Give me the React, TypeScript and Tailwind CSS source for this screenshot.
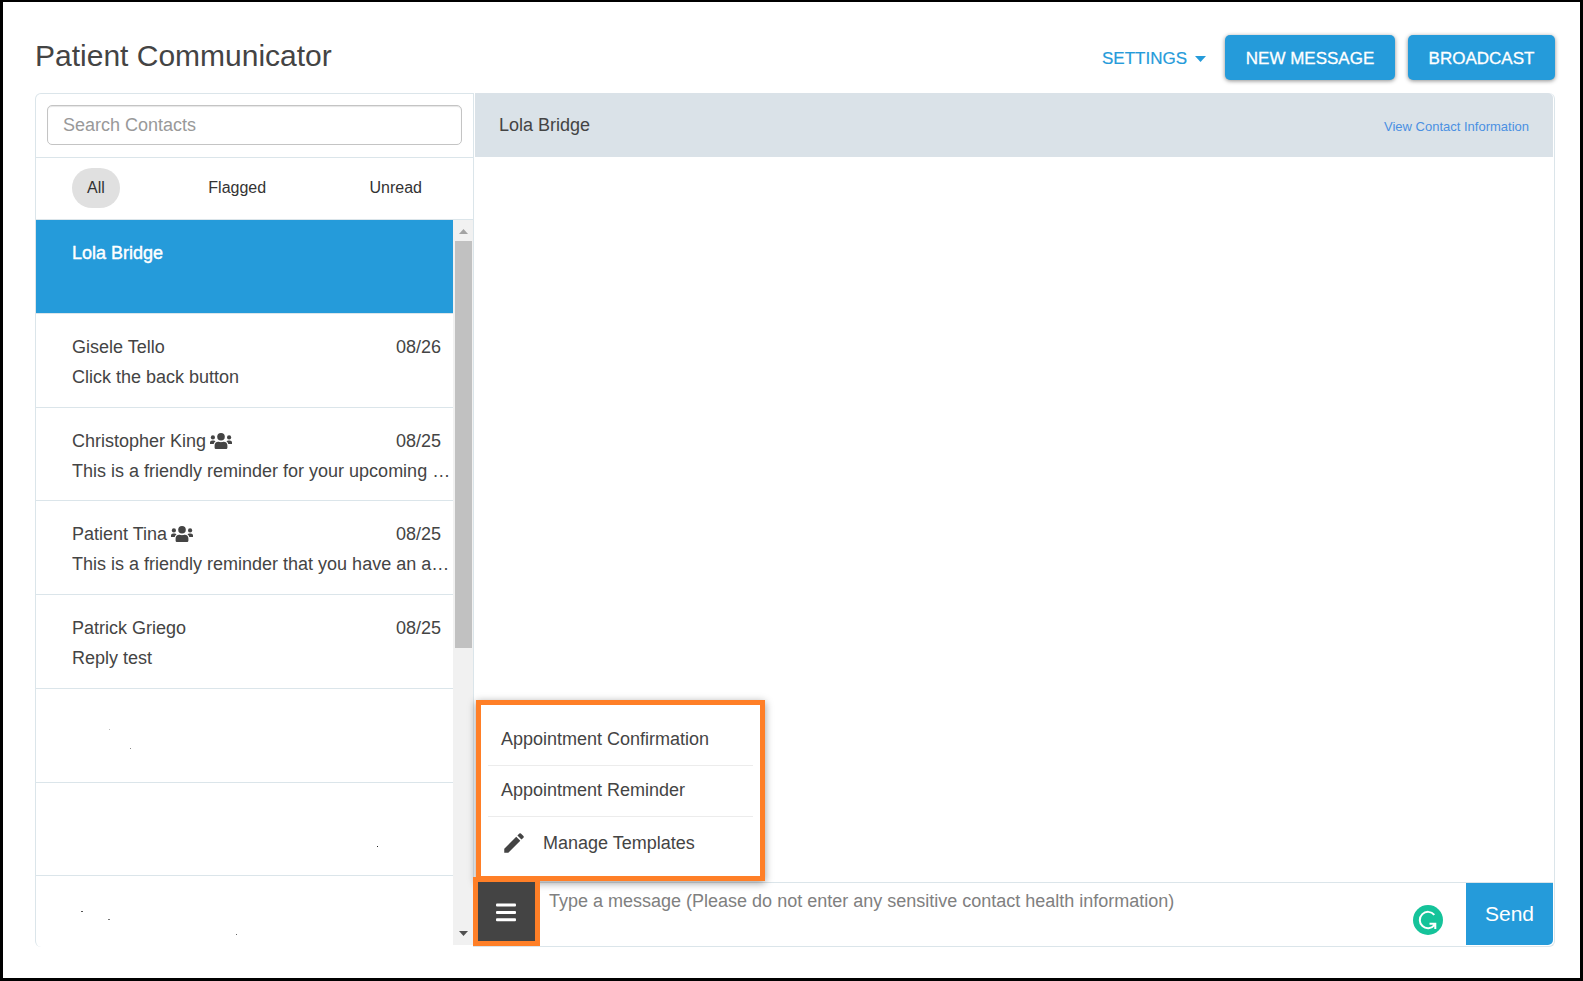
import React from "react";
import { MdEdit } from "react-icons/md";

type Contact = {
  name: string;
  date?: string;
  preview?: string;
  group?: boolean;
  selected?: boolean;
};

const contacts: Contact[] = [
  { name: "Lola Bridge", selected: true },
  { name: "Gisele Tello", date: "08/26", preview: "Click the back button" },
  {
    name: "Christopher King",
    date: "08/25",
    preview: "This is a friendly reminder for your upcoming …",
    group: true,
  },
  {
    name: "Patient Tina",
    date: "08/25",
    preview: "This is a friendly reminder that you have an a…",
    group: true,
  },
  { name: "Patrick Griego", date: "08/25", preview: "Reply test" },
  { name: "" },
  { name: "" },
  { name: "" },
];

function GroupIcon() {
  return (
    <svg viewBox="0 0 22 16" className="h-4 w-[22px] shrink-0" fill="currentColor" role="img" aria-label="Group">
      <circle cx="11" cy="3.800" r="3.800" />
      <circle cx="2.900" cy="4.400" r="2.100" />
      <circle cx="19.100" cy="4.400" r="2.100" />
      <path d="M4.600 14.400V12.600C4.600 10.300 6 8.800 8.200 8.800C9.100 8.800 9.600 9.200 11 9.200S12.900 8.800 13.800 8.800C16 8.800 17.400 10.300 17.400 12.600V14.400C17.400 15.300 16.700 16 15.800 16H6.200C5.300 16 4.600 15.300 4.600 14.400Z" />
      <path d="M0 10.900V9.600C0 8.200 1 7.400 2.200 7.400H3.600C4.400 7.400 5 7.700 5.500 8.200C4.500 8.900 3.900 9.800 3.700 10.900Z" />
      <path d="M22 10.900V9.600C22 8.200 21 7.400 19.800 7.400H18.400C17.600 7.400 17 7.700 16.500 8.200C17.500 8.900 18.100 9.800 18.300 10.900Z" />
    </svg>
  );
}

function Header() {
  const primary =
    "h-[45px] rounded-[5px] bg-[#259bda] pt-[2px] text-[17px] text-white shadow-[0_1px_4px_rgba(0,0,0,0.45)] [-webkit-text-stroke:0.3px_white]";
  return (
    <header className="flex items-start justify-between pr-[25px] pl-8">
      <h1 className="pt-1 text-[30px] leading-[34px] text-[#444]">Patient Communicator</h1>
      <div className="flex items-center">
        <button
          type="button"
          className="mr-[19px] flex items-center gap-2 pt-[2px] text-[17px] text-[#259bda] [-webkit-text-stroke:0.2px_#259bda]"
        >
          SETTINGS
          <svg viewBox="0 0 11 6" className="h-[6px] w-[11px]" fill="currentColor" aria-hidden="true">
            <path d="M0 0h11L5.500 6z" />
          </svg>
        </button>
        <button type="button" className={primary + " mr-[13px] w-[170px]"}>
          NEW MESSAGE
        </button>
        <button type="button" className={primary + " w-[147px]"}>
          BROADCAST
        </button>
      </div>
    </header>
  );
}

function ContactRow({ c }: { c: Contact }) {
  return (
    <li
      className={
        c.selected
          ? "min-w-0 border-b border-[#dbe5ea] bg-[#259bda] pt-[18px] pl-9 text-white"
          : "min-w-0 border-b border-[#dbe5ea] pt-[18px] pl-9"
      }
    >
      <div className="flex items-center justify-between pr-3">
        <span
          className={
            c.selected
              ? "flex items-center gap-1 [-webkit-text-stroke:0.4px_white]"
              : "flex items-center gap-1"
          }
        >
          {c.name}
          {c.group && <GroupIcon />}
        </span>
        <span>{c.date}</span>
      </div>
      <p className="truncate">{c.preview}</p>
    </li>
  );
}

function ScrollBar() {
  return (
    <div className="mb-[2px] flex w-5 shrink-0 flex-col items-center bg-[#f1f1f1]" aria-hidden="true">
      <svg viewBox="0 0 20 21" className="h-[21px] w-5 shrink-0" fill="#a3a3a3">
        <path d="M6 14L10.500 9L15 14z" />
      </svg>
      <div className="flex w-full flex-1 flex-col pr-px pl-[2px]">
        <div className="grow-[406] basis-0 bg-[#c1c1c1]" />
        <div className="grow-[276] basis-0" />
      </div>
      <svg viewBox="0 0 20 21" className="h-[21px] w-5 shrink-0" fill="#505050">
        <path d="M6 7H15L10.500 12z" />
      </svg>
    </div>
  );
}

function Specks() {
  return (
    <svg className="pointer-events-none absolute top-0 left-0 h-[725px] w-[416px]" aria-hidden="true">
      <rect x="73" y="509" width="1" height="1" fill="#bbb" />
      <rect x="94" y="528" width="1" height="1" fill="#888" />
      <rect x="341" y="626" width="1" height="1" fill="#222" />
      <rect x="45" y="691" width="2" height="1" fill="#555" />
      <rect x="72" y="699" width="2" height="1" fill="#777" />
      <rect x="200" y="714" width="1" height="1" fill="#666" />
    </svg>
  );
}

function Sidebar() {
  return (
    <aside className="flex w-[439px] shrink-0 flex-col rounded-l-[6px] border-t border-r border-l border-[#dbe5ea]">
      <div className="border-b border-[#dbe5ea] px-[11px] pt-[11px] pb-3">
        <input
          type="text"
          aria-label="Search Contacts"
          placeholder="Search Contacts"
          className="block h-10 w-full rounded-[5px] border border-[#c4c4c4] px-[15px] text-[18px] shadow-[inset_0_1px_1px_rgba(0,0,0,0.1)] placeholder:text-[#999]"
        />
      </div>
      <div className="flex h-[62px] items-start justify-between border-b border-[#dbe5ea] px-9 pt-[10px] text-[16px] text-[#333]">
        <button type="button" className="h-10 w-12 rounded-[20px] bg-[#e0e0e0]">
          All
        </button>
        <button type="button" className="h-10 px-[15px]">
          Flagged
        </button>
        <button type="button" className="h-10 px-[15px]">
          Unread
        </button>
      </div>
      <div className="flex min-h-0 flex-1">
        <div className="relative min-w-0 flex-1 overflow-hidden">
          <ul className="grid h-[750px] grid-cols-1 grid-rows-8 text-[18px] leading-[30px]">
            {contacts.map((c, i) => (
              <ContactRow key={i} c={c} />
            ))}
          </ul>
          <Specks />
        </div>
        <ScrollBar />
      </div>
    </aside>
  );
}

function TemplateMenu() {
  return (
    <ul
      role="menu"
      className="absolute bottom-[2px] left-[2px] w-[289px] border-[5px] border-[#ff7f27] bg-white px-[7px] pt-[9px] pb-[7px] shadow-[0_2px_8px_rgba(0,0,0,0.4)]"
    >
      <li className="border-b border-[#ececec]">
        <button type="button" role="menuitem" className="flex h-[51px] w-full items-center px-[13px]">
          Appointment Confirmation
        </button>
      </li>
      <li className="border-b border-[#ececec]">
        <button type="button" role="menuitem" className="flex h-[50px] w-full items-center px-[13px] pb-[2px]">
          Appointment Reminder
        </button>
      </li>
      <li>
        <button type="button" role="menuitem" className="flex h-[52px] w-full items-center gap-[16px] px-[13px]">
          <MdEdit className="h-[26px] w-[26px]" />
          Manage Templates
        </button>
      </li>
    </ul>
  );
}

function Conversation() {
  return (
    <section className="flex min-w-0 flex-1 flex-col rounded-r-[6px] border-r border-b border-[#dbe5ea]">
      <div className="mr-px ml-px flex h-16 shrink-0 items-center justify-between rounded-tr-[5px] bg-[#dae2e8] px-6">
        <h2 className="text-[18px]">Lola Bridge</h2>
        <a href="#contact" className="pt-1 text-[13px] text-[#4a90e2]">
          View Contact Information
        </a>
      </div>
      <div className="flex-1" />
      <div className="relative mr-px flex h-16 shrink-0 border-t border-[#dbe5ea] pb-px">
        <div className="absolute bottom-0 left-0 h-full w-0 text-[18px]">
          <div className="relative">
            <TemplateMenu />
          </div>
        </div>
        <button
          type="button"
          aria-label="Message templates"
          className="absolute bottom-0 -left-px flex h-[69px] w-[67px] items-center justify-center border-[5px] border-[#ff7f27] bg-[#444]"
        >
          <svg viewBox="0 0 20 19" className="mt-[2px] mr-[2px] h-[19px] w-5" fill="#fff" aria-hidden="true">
            <rect x="0" y="0.500" width="20" height="3" rx="1" />
            <rect x="0" y="8" width="20" height="3" rx="1" />
            <rect x="0" y="15.300" width="20" height="3" rx="1" />
          </svg>
        </button>
        <textarea
          aria-label="Message"
          placeholder="Type a message (Please do not enter any sensitive contact health information)"
          className="block min-w-0 flex-1 resize-none bg-transparent pt-[5px] pl-[75px] text-[18px] leading-[26px] placeholder:text-[#808080]"
        />
        <svg viewBox="0 0 30 30" className="mt-[22px] mr-[23px] h-[30px] w-[30px] shrink-0" aria-hidden="true">
          <circle cx="15" cy="15" r="15" fill="#15c39a" />
          <path
            d="M21.300 9.800A8.200 8.200 0 1 0 21.400 20.200M16.500 18.700H22.300V24"
            fill="none"
            stroke="#fff"
            strokeWidth="2"
          />
          <path d="M19.500 18H23V22.500Z" fill="#fff" />
        </svg>
        <button type="button" className="w-[87px] shrink-0 rounded-br-[5px] bg-[#259bda] text-[21px] text-white">
          Send
        </button>
      </div>
    </section>
  );
}

export default function App() {
  return (
    <div className="flex h-screen min-h-[981px] flex-col border-x-[3px] border-t-[2px] border-b-[3px] border-black bg-white pt-[33px] pb-[31px] font-['Liberation_Sans',Arial,sans-serif] text-[#444]">
      <Header />
      <main className="mt-[13px] mr-[25px] ml-8 flex min-h-0 flex-1">
        <Sidebar />
        <Conversation />
      </main>
    </div>
  );
}
